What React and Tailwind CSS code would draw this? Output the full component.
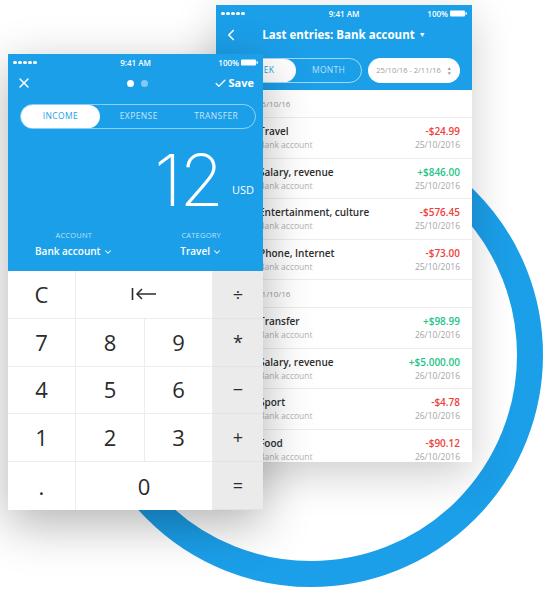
import React from 'react';
import { X, Check, ChevronDown, ChevronLeft } from 'lucide-react';

const BLUE = '#1b9fe9';

const group1 = [
    { title: 'Travel', amount: '-$24.99', date: '25/10/2016', plus: false },
    { title: 'Salary, revenue', amount: '+$846.00', date: '25/10/2016', plus: true },
    { title: 'Entertainment, culture', amount: '-$576.45', date: '25/10/2016', plus: false },
    { title: 'Phone, Internet', amount: '-$73.00', date: '25/10/2016', plus: false },
];

const group2 = [
    { title: 'Transfer', amount: '+$98.99', date: '26/10/2016', plus: true },
    { title: 'Salary, revenue', amount: '+$5.000.00', date: '26/10/2016', plus: true },
    { title: 'Sport', amount: '-$4.78', date: '26/10/2016', plus: false },
    { title: 'Food', amount: '-$90.12', date: '26/10/2016', plus: false },
];

const StatusBar = () => (
    <div className="flex items-center justify-between h-[17px] px-[5px] text-white text-[8px] font-semibold">
        <div className="flex gap-[1.5px] w-[50px]">
            {[0, 1, 2, 3, 4].map((i) => (
                <span key={i} className="w-[3.5px] h-[3.5px] rounded-full bg-white"></span>
            ))}
        </div>
        <span>9:41 AM</span>
        <div className="flex items-center justify-end gap-[2px] w-[50px]">
            <span>100%</span>
            <svg width="17" height="7" viewBox="0 0 17 7">
                <rect x="0" y="0.5" width="15" height="6" rx="1" fill="white" />
                <rect x="15.5" y="2.2" width="1.3" height="2.6" fill="white" />
            </svg>
        </div>
    </div>
);

const DateHeader = ({ label }) => (
    <div className="h-[28px] flex items-center pl-[41px] text-[8px] text-[#9a9a9a] border-b border-[#ececec]">
        {label}
    </div>
);

const EntryRow = ({ e }) => (
    <div className="h-[40.5px] flex items-center justify-between pl-[43px] pr-[12px] border-b border-[#ececec]">
        <div className="flex flex-col gap-[2px]">
            <span className="text-[10px] font-semibold text-[#2d2d2d] leading-[12px]">{e.title}</span>
            <span className="text-[8.5px] text-[#b3b3b3] leading-[11px]">Bank account</span>
        </div>
        <div className="flex flex-col items-end gap-[2px]">
            <span className={`text-[10px] font-semibold leading-[12px] ${e.plus ? 'text-[#1fc488]' : 'text-[#f03e3a]'}`}>{e.amount}</span>
            <span className="text-[8.5px] text-[#a5a5a5] leading-[11px]">{e.date}</span>
        </div>
    </div>
);

const BackPhone = () => (
    <div className="absolute left-[216px] top-[5px] w-[256px] h-[457px] bg-white overflow-hidden shadow-[0_12px_40px_rgba(0,0,0,0.2)]">
        <div className="h-[85px] bg-[#1b9fe9]">
            <StatusBar />
            <div className="relative h-[26px] flex items-center justify-center text-white">
                <ChevronLeft className="absolute left-[6px] top-[4px]" size={18} strokeWidth={2.2} />
                <span className="text-[11.5px] font-bold">Last entries: Bank account</span>
                <span className="ml-[4px] text-[7px]">▼</span>
            </div>
            <div className="flex items-center gap-[6px] px-[12px] mt-[10px]">
                <div className="flex w-[134px] h-[25px] rounded-full border border-white/60">
                    <div className="w-[67px] h-full rounded-full bg-white flex items-center justify-center text-[8.5px] text-[#1b9fe9] tracking-[0.3px]">WEEK</div>
                    <div className="flex-1 flex items-center justify-center text-[8.5px] text-white/70 tracking-[0.3px]">MONTH</div>
                </div>
                <div className="flex-1 h-[25px] rounded-full bg-white flex items-center justify-center gap-[6px] text-[7.5px] text-[#9e9e9e]">
                    <span>25/10/16 - 2/11/16</span>
                    <span className="flex flex-col leading-none text-[5px] text-[#9e9e9e]">
                        <span>▲</span>
                        <span>▼</span>
                    </span>
                </div>
            </div>
        </div>
        <DateHeader label="25/10/16" />
        {group1.map((e, i) => (
            <EntryRow key={i} e={e} />
        ))}
        <DateHeader label="21/10/16" />
        {group2.map((e, i) => (
            <EntryRow key={i} e={e} />
        ))}
    </div>
);

const Key = ({ children, className = '' }) => (
    <div className={`flex items-center justify-center border-b border-r border-[#ececec] text-[#2b2b2b] ${className}`}>
        {children}
    </div>
);

const Op = ({ children }) => (
    <div className="flex items-center justify-center bg-[#ebebeb] border-b border-[#e2e2e2] text-[#2b2b2b] text-[18px]">
        {children}
    </div>
);

const FrontPhone = () => (
    <div className="absolute left-[8px] top-[54px] w-[255px] h-[456px] bg-white shadow-[0_14px_45px_rgba(0,0,0,0.3)] flex flex-col">
        <div className="h-[217px] bg-[#1b9fe9] text-white">
            <StatusBar />
            <div className="flex items-center justify-between h-[24px] pl-[8px] pr-[9px]">
                <X size={16} strokeWidth={2.2} />
                <div className="flex gap-[7px] ml-[30px]">
                    <span className="w-[7px] h-[7px] rounded-full bg-white"></span>
                    <span className="w-[7px] h-[7px] rounded-full bg-white/45"></span>
                </div>
                <div className="flex items-center gap-[2px] text-[11px] font-bold">
                    <Check size={13} strokeWidth={2.4} />
                    <span>Save</span>
                </div>
            </div>
            <div className="flex h-[25px] ml-[12px] mr-[7px] mt-[9px] rounded-full border border-white/50 text-[8.5px] tracking-[0.4px]">
                <div className="w-[79px] h-full rounded-full bg-white flex items-center justify-center text-[#1b9fe9]">INCOME</div>
                <div className="flex-1 flex items-center justify-center text-white/75">EXPENSE</div>
                <div className="flex-1 flex items-center justify-center text-white/75">TRANSFER</div>
            </div>
            <div className="flex items-end justify-end pr-[9px] mt-[16px] h-[70px]">
                <span className="text-[72px] font-extralight leading-[70px] font-['Inter',sans-serif] tracking-[-2px]">12</span>
                <span className="text-[11px] ml-[10px] mb-[17px]">USD</span>
            </div>
            <div className="flex justify-between mt-[15px] pl-[27px] pr-[41px]">
                <div className="flex flex-col items-center">
                    <span className="text-[7.5px] text-white/70 tracking-[0.2px]">ACCOUNT</span>
                    <span className="flex items-center gap-[2px] text-[10px] font-semibold mt-[3px]">
                        Bank account <ChevronDown size={10} strokeWidth={2.5} />
                    </span>
                </div>
                <div className="flex flex-col items-center">
                    <span className="text-[7.5px] text-white/70 tracking-[0.2px]">CATEGORY</span>
                    <span className="flex items-center gap-[2px] text-[10px] font-semibold mt-[3px]">
                        Travel <ChevronDown size={10} strokeWidth={2.5} />
                    </span>
                </div>
            </div>
        </div>
        <div className="flex-1 grid grid-cols-[68px_69px_68px_1fr] grid-rows-5 text-[22px]">
            <Key>C</Key>
            <Key className="col-span-2">
                <svg width="26" height="14" viewBox="0 0 26 14">
                    <line x1="1.5" y1="1" x2="1.5" y2="13" stroke="#2b2b2b" strokeWidth="1.6" />
                    <line x1="6" y1="7" x2="25" y2="7" stroke="#2b2b2b" strokeWidth="1.5" />
                    <polyline points="11,2 6,7 11,12" fill="none" stroke="#2b2b2b" strokeWidth="1.5" />
                </svg>
            </Key>
            <Op>÷</Op>
            <Key>7</Key>
            <Key>8</Key>
            <Key>9</Key>
            <Op>*</Op>
            <Key>4</Key>
            <Key>5</Key>
            <Key>6</Key>
            <Op>−</Op>
            <Key>1</Key>
            <Key>2</Key>
            <Key>3</Key>
            <Op>+</Op>
            <Key className="border-b-0">.</Key>
            <Key className="col-span-2 border-b-0">0</Key>
            <Op>=</Op>
        </div>
    </div>
);

export default function App() {
    return (
        <div className="relative w-[545px] h-[597px] bg-white overflow-hidden font-['Open_Sans','Liberation_Sans',sans-serif]">
            <svg className="absolute inset-0" width="545" height="597">
                <circle cx="311" cy="355" r="219" fill="none" stroke={BLUE} strokeWidth="26" />
            </svg>
            <BackPhone />
            <FrontPhone />
        </div>
    );
}
